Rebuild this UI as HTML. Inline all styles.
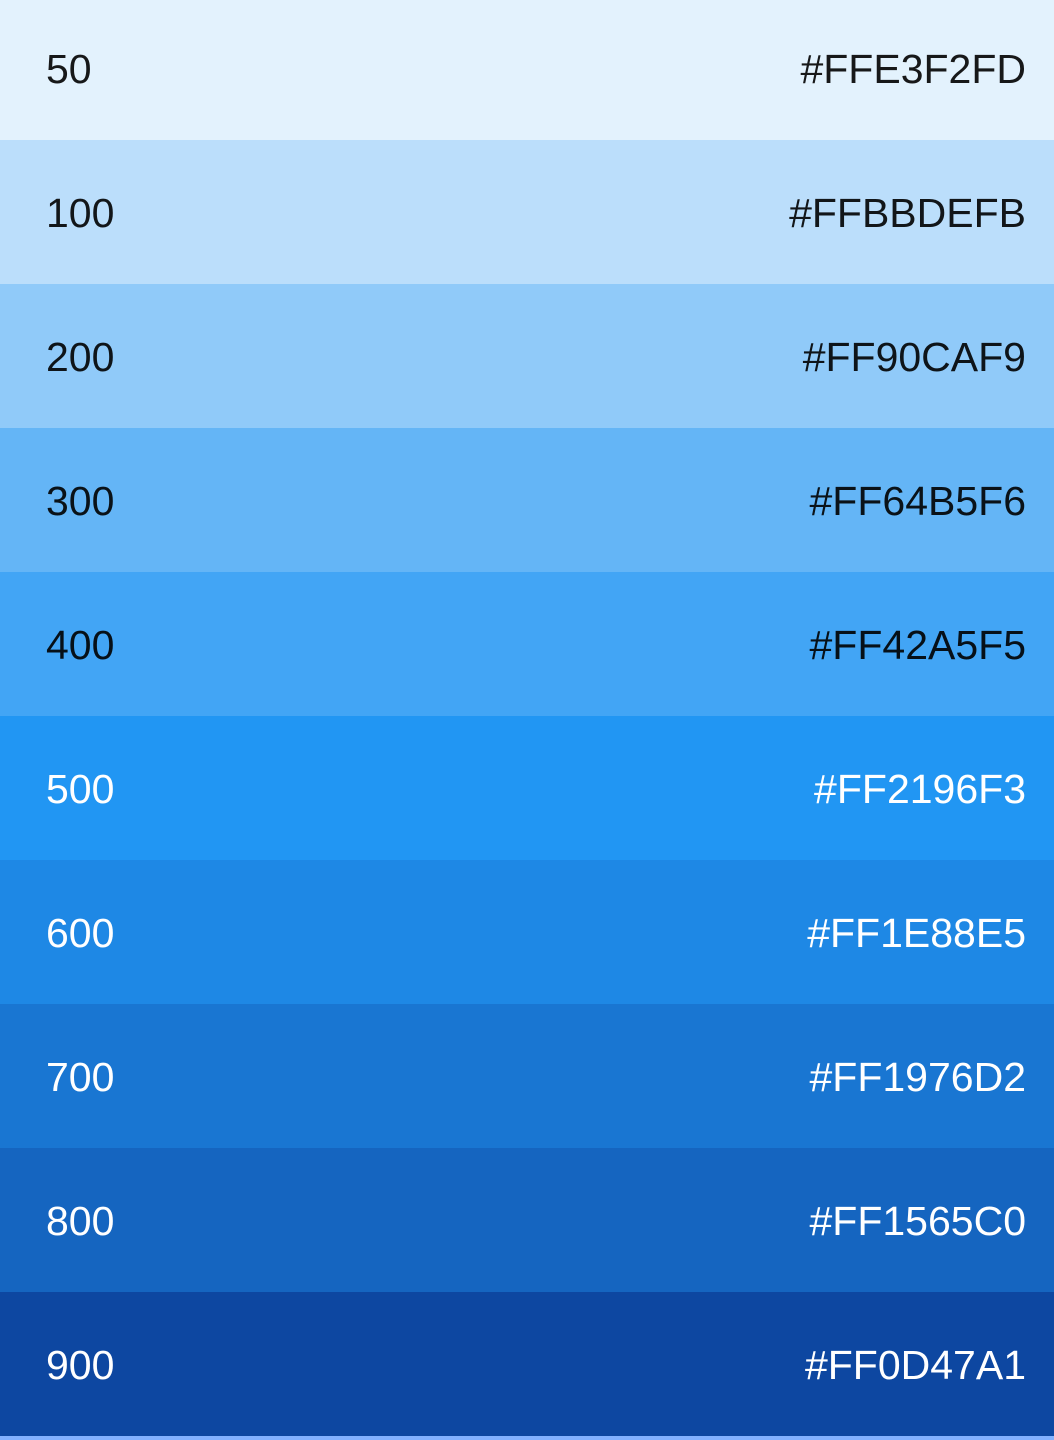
<!DOCTYPE html>
<html><head><style>
html,body{margin:0;padding:0;width:1054px;height:1440px;overflow:hidden;font-family:"Liberation Sans",sans-serif;}
.r{position:absolute;left:0;width:1054px;height:144px;}
.r span{position:absolute;top:4px;line-height:139px;font-size:41px;}
.l{left:46px}.h{right:28px}
.d{color:rgba(0,0,0,0.9)}.w{color:#fff}
</style></head><body>
<div class="r d" style="top:-4px;background:#E3F2FD"><span class="l">50</span><span class="h">#FFE3F2FD</span></div>
<div class="r d" style="top:140px;background:#BBDEFB"><span class="l">100</span><span class="h">#FFBBDEFB</span></div>
<div class="r d" style="top:284px;background:#90CAF9"><span class="l">200</span><span class="h">#FF90CAF9</span></div>
<div class="r d" style="top:428px;background:#64B5F6"><span class="l">300</span><span class="h">#FF64B5F6</span></div>
<div class="r d" style="top:572px;background:#42A5F5"><span class="l">400</span><span class="h">#FF42A5F5</span></div>
<div class="r w" style="top:716px;background:#2196F3"><span class="l">500</span><span class="h">#FF2196F3</span></div>
<div class="r w" style="top:860px;background:#1E88E5"><span class="l">600</span><span class="h">#FF1E88E5</span></div>
<div class="r w" style="top:1004px;background:#1976D2"><span class="l">700</span><span class="h">#FF1976D2</span></div>
<div class="r w" style="top:1148px;background:#1565C0"><span class="l">800</span><span class="h">#FF1565C0</span></div>
<div class="r w" style="top:1292px;background:#0D47A1"><span class="l">900</span><span class="h">#FF0D47A1</span></div>
<div class="r" style="top:1436px;height:4px;background:#82B1FF"></div>
</body></html>
